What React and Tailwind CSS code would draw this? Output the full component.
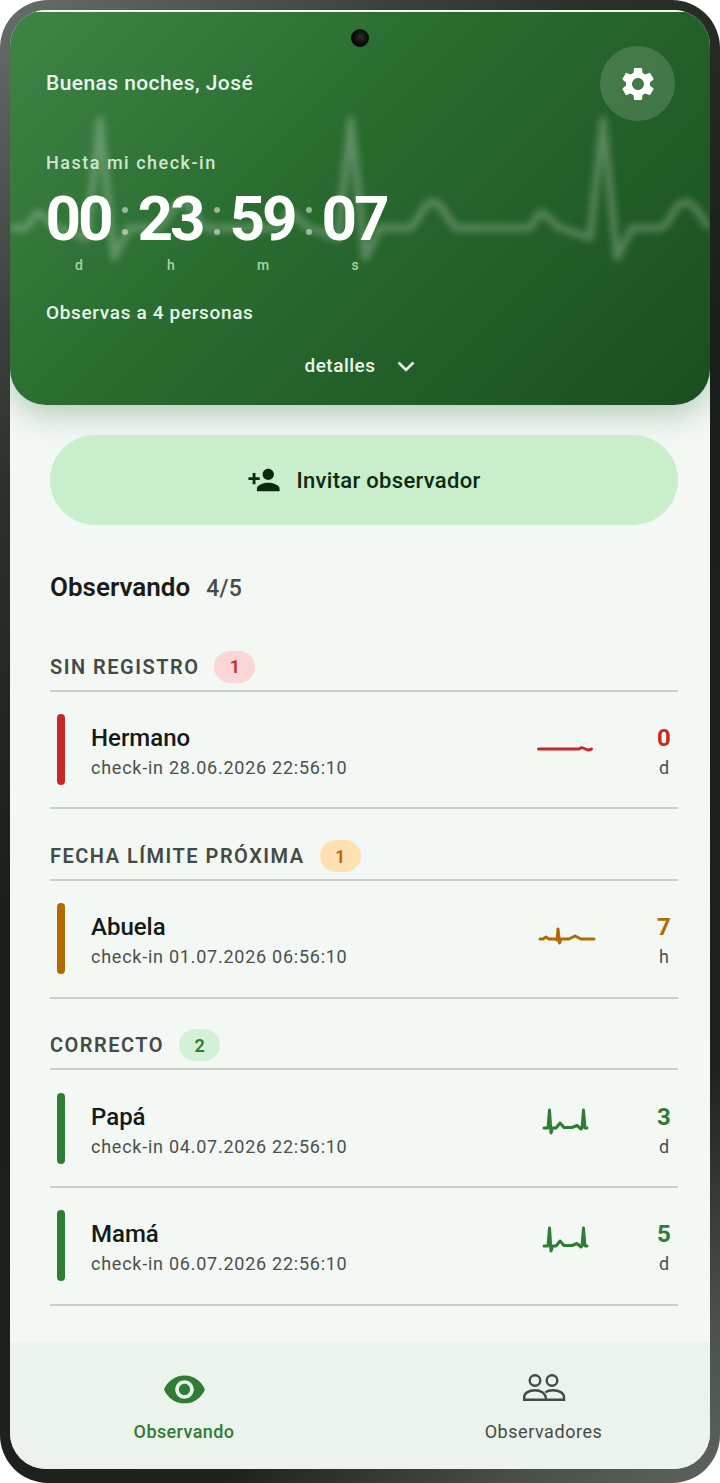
import React from "react";

const font = { fontFamily: "Roboto, sans-serif" };

function Spark({ d, color }) {
  return (
    <svg width="64" height="40" viewBox="0 0 64 40" fill="none" className="shrink-0">
      <path d={d} stroke={color} strokeWidth="3" strokeLinecap="round" strokeLinejoin="round" />
    </svg>
  );
}

const sparkFlat = "M5.5 20 H46 Q48 18 50 19 T55 21 Q57 21 58.5 20";
const sparkMid = "M7 20 H10 L13 18 L16 20 H22 L24 21 L25 10 L26.5 24 L28 20 H36 L42 17 L48 20 H61";
const sparkFull = "M11 20 H15 L16.5 2 L18 25 L19.5 20 H23 L27 15 L31 19.5 H39 L44 17.5 L48 21 L49 20 L50.5 2 L52 20 H54";

function Row({ name, date, color, value, unit, spark }) {
  return (
    <div className="flex items-center h-[117.7px] border-b-2 border-[#c9cec9] pl-[7px] pr-[2px]">
      <div className="w-2 h-[71px] rounded-full" style={{ backgroundColor: color }} />
      <div className="flex-1 pl-[26px] pt-[5px]">
        <div className="text-[24px] leading-[30px] font-medium text-[#141a15]">{name}</div>
        <div className="text-[18px] leading-[26px] tracking-[0.75px] text-[#4a504b] mt-[2px]">check-in {date}</div>
      </div>
      <div className="w-[64px] mr-[55px]">
        <Spark d={spark} color={color} />
      </div>
      <div className="w-[24px] text-center pt-[5px]">
        <div className="text-[24px] leading-[30px] font-bold" style={{ color }}>{value}</div>
        <div className="text-[18px] leading-[26px] text-[#4a504b] mt-[2px]">{unit}</div>
      </div>
    </div>
  );
}

function Section({ title, count, badgeBg, badgeFg, children }) {
  return (
    <div>
      <div className="flex items-center h-[71.6px] pt-[24px] border-b-2 border-[#c9cec9] gap-[15px]">
        <span className="text-[20px] font-semibold tracking-[1.5px] text-[#444b45]">{title}</span>
        <span
          className="w-[41px] h-[32px] rounded-full flex items-center justify-center text-[18px] font-semibold"
          style={{ backgroundColor: badgeBg, color: badgeFg }}
        >
          {count}
        </span>
      </div>
      {children}
    </div>
  );
}

const Colon = () => (
  <div className="w-[26px] h-[64px] flex flex-col items-center justify-center gap-[16px] pt-[4px]">
    <div className="w-[6px] h-[6px] rounded-full bg-white/50" />
    <div className="w-[6px] h-[6px] rounded-full bg-white/50" />
  </div>
);

function Unit({ value, label }) {
  return (
    <div className="w-[66px] flex flex-col items-center">
      <div className="text-[62px] leading-[64px] font-bold text-white tracking-[-3px] whitespace-nowrap -translate-x-[1px]">{value}</div>
      <div className="text-[14px] leading-[18px] font-medium text-[#a5d6a7] mt-[5px]">{label}</div>
    </div>
  );
}

export default function App() {
  return (
    <div style={font} className="w-[720px] h-[1483px] bg-white overflow-hidden">
      <div className="w-full h-full rounded-[48px] pt-[10px] px-[10px] pb-[14px] bg-[linear-gradient(140deg,#6a6e6a_0%,#3c403c_16%,#2c2f2c_24%,#1a1e1b_45%,#1f231f_80%,#4a504a_92%,#5d635d_100%)]">
        <div className="relative w-full h-full rounded-[36px] overflow-hidden bg-[#f3f8f5] flex flex-col">
          <div className="h-[2px] bg-white shrink-0" />
          <div className="relative z-10 h-[393px] shrink-0 rounded-b-[36px] overflow-hidden bg-[linear-gradient(135deg,#3f8446_0%,#2a6d30_40%,#1a4f1f_100%)]">
            <svg
              className="absolute left-0 top-0 blur-[3.5px]"
              width="700"
              height="393"
              viewBox="0 0 700 393"
              fill="none"
            >
              <path
                d="M0 216 H15 C20 214 25 201 28 201 C34 201 42 216 48 216 L77 226 L90 108 L104 246 L119 216 H147 C155 216 162 190 172 190 C182 190 190 216 197 216 H267 C272 216 276 201 280 201 C286 201 294 216 300 216 L328 226 L341 108 L355 246 L370 216 H398 C406 216 413 190 423 190 C433 190 441 216 448 216 H518 C523 216 527 201 531 201 C537 201 545 216 551 216 L580 226 L593 108 L607 246 L622 216 H650 C658 216 665 190 675 190 C685 190 692 208 700 216"
                stroke="white"
                strokeOpacity="0.25"
                strokeWidth="7"
                strokeLinejoin="round"
              />
            </svg>
            <div className="relative h-full pl-[36px] pr-[35px]">
              <div className="flex items-start justify-between pt-[34px] h-[128px]">
                <div className="text-[21px] leading-[75px] font-medium tracking-[0.42px] text-[#e8f5e9]">Buenas noches, José</div>
                <button className="w-[75px] h-[75px] rounded-full bg-white/15 flex items-center justify-center">
                  <svg width="40" height="40" viewBox="0 0 24 24" fill="white">
                    <path d="M19.14 12.94c.04-.3.06-.61.06-.94 0-.32-.02-.64-.07-.94l2.03-1.58c.18-.14.23-.41.12-.61l-1.92-3.32c-.12-.22-.37-.29-.59-.22l-2.39.96c-.5-.38-1.03-.7-1.62-.94l-.36-2.54c-.04-.24-.24-.41-.48-.41h-3.84c-.24 0-.43.17-.47.41l-.36 2.54c-.59.24-1.13.57-1.62.94l-2.39-.96c-.22-.08-.47 0-.59.22L2.74 8.87c-.12.21-.08.47.12.61l2.03 1.58c-.05.3-.09.63-.09.94s.02.64.07.94l-2.03 1.58c-.18.14-.23.41-.12.61l1.92 3.32c.12.22.37.29.59.22l2.39-.96c.5.38 1.03.7 1.62.94l.36 2.54c.05.24.24.41.48.41h3.84c.24 0 .44-.17.47-.41l.36-2.54c.59-.24 1.13-.56 1.62-.94l2.39.96c.22.08.47 0 .59-.22l1.92-3.32c.12-.22.07-.47-.12-.61l-2.01-1.58zM12 15.6c-1.98 0-3.6-1.62-3.6-3.6s1.62-3.6 3.6-3.6 3.6 1.62 3.6 3.6-1.62 3.6-3.6 3.6z" />
                  </svg>
                </button>
              </div>
              <div className="text-[18px] leading-[22px] font-medium tracking-[1.5px] text-[#cfe6d0] mt-[12px]">Hasta mi check-in</div>
              <div className="flex mt-[13px]">
                <Unit value="00" label="d" />
                <Colon />
                <Unit value="23" label="h" />
                <Colon />
                <Unit value="59" label="m" />
                <Colon />
                <Unit value="07" label="s" />
              </div>
              <div className="text-[19px] leading-[24px] font-medium tracking-[0.65px] text-[#e8f5e9] mt-[27px]">Observas a 4 personas</div>
              <div className="flex items-center justify-center gap-[20px] mt-[29px] -ml-[36px] -mr-[35px]">
                <span className="text-[19px] leading-[24px] font-medium tracking-[0.5px] text-[#e8f5e9]">detalles</span>
                <svg width="20" height="20" viewBox="0 0 20 20" fill="none">
                  <path d="M2.5 6.5 L10 14 L17.5 6.5" stroke="#e8f5e9" strokeWidth="2.6" />
                </svg>
              </div>
            </div>
          </div>
          <div className="absolute left-0 top-[2px] w-full h-[393px] rounded-b-[36px] shadow-[0_10px_30px_rgba(30,90,35,0.28)]" />

          <div className="relative z-10 flex-1 pl-[40px] pr-[32px] pt-[30px] flex flex-col">
            <button className="h-[90px] w-[628px] rounded-full bg-[#c8eecb] flex items-center justify-center gap-[15px] shrink-0">
              <svg width="34" height="34" viewBox="0 0 24 24" fill="#0b2a0f">
                <path d="M15 12c2.21 0 4-1.79 4-4s-1.79-4-4-4-4 1.79-4 4 1.79 4 4 4zm-9-2V7H4v3H1v2h3v3h2v-3h3v-2H6zm9 4c-2.67 0-8 1.34-8 4v2h16v-2c0-2.66-5.33-4-8-4z" />
              </svg>
              <span className="text-[22px] font-medium tracking-[0.3px] text-[#0b2a0f]">Invitar observador</span>
            </button>
            <div className="flex items-baseline gap-[16px] mt-[44px]">
              <span className="text-[26px] leading-[36px] font-semibold text-[#1a1c19]">Observando</span>
              <span className="text-[23px] leading-[36px] font-medium text-[#464c46] tracking-[0.3px]">4/5</span>
            </div>
            <div className="mt-[13px]">
              <Section title="SIN REGISTRO" count="1" badgeBg="#fcd6d6" badgeFg="#c62828">
                <Row name="Hermano" date="28.06.2026 22:56:10" color="#c62828" value="0" unit="d" spark={sparkFlat} />
              </Section>
              <Section title="FECHA LÍMITE PRÓXIMA" count="1" badgeBg="#ffe0b2" badgeFg="#b26a00">
                <Row name="Abuela" date="01.07.2026 06:56:10" color="#b26a00" value="7" unit="h" spark={sparkMid} />
              </Section>
              <Section title="CORRECTO" count="2" badgeBg="#d4f0d6" badgeFg="#2e7d32">
                <Row name="Papá" date="04.07.2026 22:56:10" color="#2e7d32" value="3" unit="d" spark={sparkFull} />
                <Row name="Mamá" date="06.07.2026 22:56:10" color="#2e7d32" value="5" unit="d" spark={sparkFull} />
              </Section>
            </div>
          </div>

          <div className="relative z-10 h-[127px] shrink-0 bg-[#ebf3ec] flex">
            <div className="w-[350px] flex flex-col items-center pr-[2px] pt-[27px]">
              <svg width="45" height="39" viewBox="0 0 24 21" fill="#2e7d32">
                <path d="M12 3.5C7 3.5 2.73 6.61 1 11c1.73 4.39 6 7.5 11 7.5s9.27-3.11 11-7.5c-1.73-4.39-6-7.5-11-7.5zM12 16c-2.76 0-5-2.24-5-5s2.24-5 5-5 5 2.24 5 5-2.24 5-5 5zm0-8c-1.66 0-3 1.34-3 3s1.34 3 3 3 3-1.34 3-3-1.34-3-3-3z" />
              </svg>
              <span className="text-[18px] leading-[24px] font-medium tracking-[0.4px] text-[#2e7d32] mt-[12px]">Observando</span>
            </div>
            <div className="w-[350px] flex flex-col items-center pl-[17px] pt-[26px]">
              <svg width="44" height="42" viewBox="0 0 44 42" fill="none" stroke="#444b45" strokeWidth="2.4">
                <circle cx="13" cy="12.5" r="5.3" />
                <circle cx="30" cy="12.5" r="5.3" />
                <path d="M2.2 31.8V29c0-4 5-6.8 10.8-6.8 5 0 11 2.5 11 9.6H2.2zM24 31.8h18v-2.8c0-4-5-6.8-11-6.8-3 0-5.5.6-7.7 2" />
              </svg>
              <span className="text-[18px] leading-[24px] tracking-[0.55px] text-[#444b45] mt-[10px]">Observadores</span>
            </div>
          </div>

          <div className="absolute z-20 left-[341px] top-[19px] w-[18px] h-[18px] rounded-full bg-[radial-gradient(circle_at_55%_45%,#2a2e2a_0%,#050605_60%)]" />
        </div>
      </div>
    </div>
  );
}
